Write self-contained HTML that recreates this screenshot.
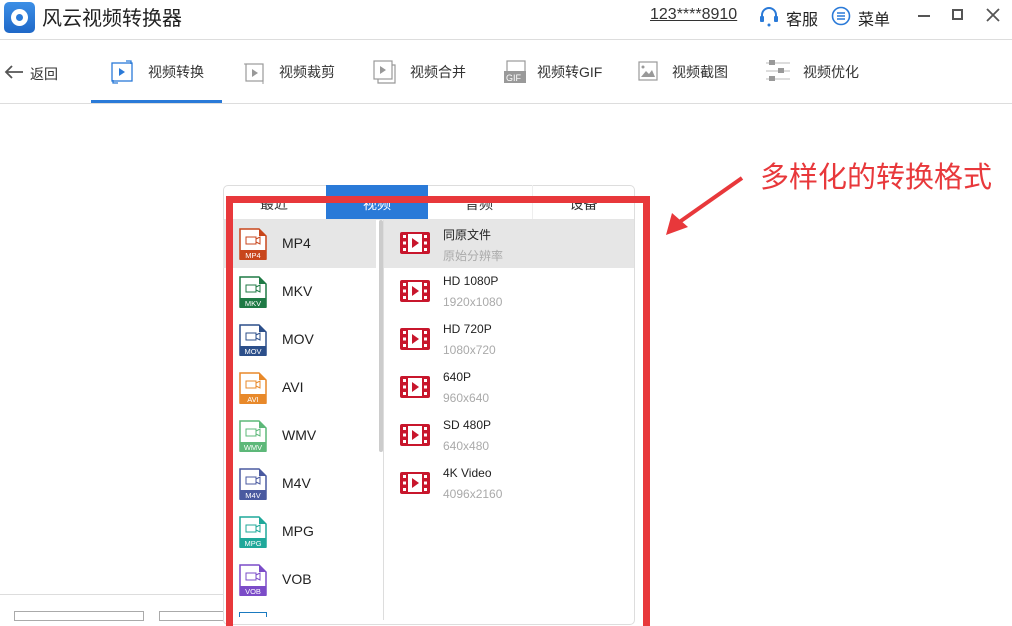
<!DOCTYPE html>
<html><head><meta charset="utf-8"><style>
*{margin:0;padding:0;box-sizing:border-box}
body{width:1012px;height:615px;overflow:hidden;background:#fff;font-family:"Liberation Sans","Noto Sans CJK SC",sans-serif;position:relative;color:#222}
.a{position:absolute}
.tab{position:absolute;top:185px;height:34px;width:102px;text-align:center;font-size:14px;line-height:38px;color:#333;overflow:hidden}
.li{position:absolute;left:223px;width:153px;height:48px}
.li .t{position:absolute;left:59px;top:15px;font-size:14px;color:#222}
.li svg{position:absolute;left:16px;top:8px}
.ri{position:absolute;left:384px;width:250px;height:48px}
.ri svg{position:absolute;left:16px;top:12px}
.ri .t1{position:absolute;left:59px;top:6px;font-size:12px;color:#222}
.ri .t2{position:absolute;left:59px;top:27px;font-size:12px;color:#aaa}
.nav{position:absolute;top:62px;font-size:14px;color:#333}
</style></head><body>
<!-- title bar -->
<div class="a" style="left:4px;top:2px;width:31px;height:31px;border-radius:5px;background:linear-gradient(#3c8fe6,#1f68c8)"></div>
<div class="a" style="left:11px;top:9px;width:17px;height:17px;border-radius:50%;background:#fff"></div>
<div class="a" style="left:16px;top:14px;width:7px;height:7px;border-radius:50%;background:#2a7ad8"></div>
<div class="a" style="left:42px;top:2px;font-size:20px;color:#222">风云视频转换器</div>
<div class="a" style="left:650px;top:6px;font-size:16px;color:#333;text-decoration:underline">123****8910</div>
<svg class="a" style="left:759px;top:6px" width="20" height="22" viewBox="0 0 20 22"><path d="M3 12 V9 a7 7 0 0 1 14 0 V12" fill="none" stroke="#2a7ad8" stroke-width="2"/><rect x="1" y="10" width="4" height="6" rx="1" fill="#2a7ad8"/><rect x="15" y="10" width="4" height="6" rx="1" fill="#2a7ad8"/><circle cx="10" cy="19" r="1.5" fill="#2a7ad8"/></svg>
<div class="a" style="left:786px;top:6px;font-size:16px;color:#222">客服</div>
<svg class="a" style="left:831px;top:6px" width="20" height="20"><circle cx="10" cy="10" r="8.5" fill="none" stroke="#2a7ad8" stroke-width="1.6"/><path d="M6 7h8M6 10h8M6 13h8" stroke="#2a7ad8" stroke-width="1.5"/></svg>
<div class="a" style="left:858px;top:6px;font-size:16px;color:#222">菜单</div>
<div class="a" style="left:918px;top:15px;width:12px;height:2px;background:#555"></div>
<div class="a" style="left:952px;top:9px;width:11px;height:11px;border:2px solid #555"></div>
<svg class="a" style="left:986px;top:8px" width="14" height="14"><path d="M1 1L13 13M13 1L1 13" stroke="#555" stroke-width="1.8"/></svg>
<div class="a" style="left:0;top:39px;width:1012px;height:1px;background:#ddd"></div>
<!-- toolbar -->
<svg class="a" style="left:4px;top:64px" width="20" height="16"><path d="M19 8H2M8 2L2 8l6 6" fill="none" stroke="#555" stroke-width="1.8"/></svg>
<div class="nav" style="left:30px;top:64px">返回</div>
<svg class="a" style="left:110px;top:59px" width="24" height="26"><rect x="2" y="4" width="20" height="18" fill="none" stroke="#2a7ad8" stroke-width="1.3"/><path d="M9 9l6 4-6 4z" fill="#2a7ad8"/><path d="M16 2h5v3M8 24H3v-3" fill="none" stroke="#2a7ad8" stroke-width="1.3"/></svg>
<div class="nav" style="left:148px">视频转换</div>
<div class="a" style="left:91px;top:100px;width:131px;height:3px;background:#2a7ad8"></div>
<svg class="a" style="left:242px;top:59px" width="24" height="26"><rect x="4" y="5" width="17" height="17" fill="none" stroke="#999" stroke-width="1.2"/><path d="M10 10l6 4-6 4z" fill="#999"/><path d="M2 5h2M21 22v3" stroke="#999"/></svg>
<div class="nav" style="left:279px">视频裁剪</div>
<svg class="a" style="left:372px;top:59px" width="26" height="26"><rect x="2" y="2" width="18" height="18" fill="#fff" stroke="#999" stroke-width="1.2"/><path d="M20 6h3v18H6v-4" fill="none" stroke="#999" stroke-width="1.2"/><path d="M8 7l6 4-6 4z" fill="#999"/></svg>
<div class="nav" style="left:410px">视频合并</div>
<svg class="a" style="left:503px;top:59px" width="26" height="26"><rect x="4" y="2" width="18" height="18" fill="none" stroke="#999" stroke-width="1.2"/><rect x="1" y="12" width="22" height="12" fill="#999"/><text x="3" y="22" font-size="9" fill="#fff" font-family="Liberation Sans">GIF</text></svg>
<div class="nav" style="left:537px">视频转GIF</div>
<svg class="a" style="left:636px;top:59px" width="24" height="26"><rect x="3" y="3" width="18" height="18" fill="none" stroke="#999" stroke-width="1.2"/><path d="M5 18l5-6 3 3 3-4 3 7z" fill="#999"/><circle cx="7" cy="8" r="1.5" fill="#999"/></svg>
<div class="nav" style="left:672px">视频截图</div>
<svg class="a" style="left:765px;top:59px" width="26" height="26"><path d="M1 4h24M1 12h24M1 20h24" stroke="#bbb" stroke-width="1"/><rect x="4" y="1" width="6" height="5" fill="#999"/><rect x="13" y="9" width="6" height="5" fill="#999"/><rect x="4" y="17" width="6" height="5" fill="#999"/></svg>
<div class="nav" style="left:803px">视频优化</div>
<div class="a" style="left:0;top:103px;width:1012px;height:1px;background:#ddd"></div>
<!-- annotation -->
<div class="a" style="left:760px;top:154px;font-size:29px;color:#e8383b">多样化的转换格式</div>
<svg class="a" style="left:660px;top:175px" width="90" height="65"><path d="M82 3L18 48" stroke="#e8383b" stroke-width="4"/><path d="M6 60l6-22 16 14z" fill="#e8383b"/></svg>
<!-- bottom left -->
<div class="a" style="left:0;top:594px;width:224px;height:1px;background:#ddd"></div>
<div class="a" style="left:14px;top:611px;width:130px;height:10px;border:1px solid #aaa"></div>
<div class="a" style="left:159px;top:611px;width:70px;height:10px;border:1px solid #aaa"></div>
<!-- panel -->
<div class="a" style="left:223px;top:185px;width:412px;height:440px;border:1px solid #ddd;border-radius:5px;background:#fff"></div>
<div class="tab" style="left:223px">最近</div>
<div class="tab" style="left:326px;background:#2a7ad8;color:#fff">视频</div>
<div class="tab" style="left:428px">音频</div>
<div class="tab" style="left:532px;border-left:1px solid #eee">设备</div>
<div class="a" style="left:224px;top:219px;width:410px;height:1px;background:#e5e5e5"></div>
<div class="a" style="left:383px;top:220px;width:1px;height:400px;background:#ddd"></div>
<div class="a" style="left:379px;top:220px;width:4px;height:232px;background:#ccc;border-radius:2px"></div>
<div class="li" style="top:220px;background:#e6e6e6"><svg width="28" height="32"><path d="M1 1h19l7 7v23H1z" fill="#fff" stroke="#c8461c" stroke-width="1.5"/><path d="M20 1v7h7" fill="#c8461c"/><rect x="1" y="22" width="26" height="10" fill="#c8461c"/><rect x="7" y="9" width="10" height="7" fill="none" stroke="#c8461c"/><path d="M17 11l4-2v7l-4-2" fill="none" stroke="#c8461c"/><text x="14" y="30" font-size="7.5" fill="#fff" text-anchor="middle" font-family="Liberation Sans">MP4</text></svg><div class="t">MP4</div></div>
<div class="li" style="top:268px"><svg width="28" height="32"><path d="M1 1h19l7 7v23H1z" fill="#fff" stroke="#1f7a45" stroke-width="1.5"/><path d="M20 1v7h7" fill="#1f7a45"/><rect x="1" y="22" width="26" height="10" fill="#1f7a45"/><rect x="7" y="9" width="10" height="7" fill="none" stroke="#1f7a45"/><path d="M17 11l4-2v7l-4-2" fill="none" stroke="#1f7a45"/><text x="14" y="30" font-size="7.5" fill="#fff" text-anchor="middle" font-family="Liberation Sans">MKV</text></svg><div class="t">MKV</div></div>
<div class="li" style="top:316px"><svg width="28" height="32"><path d="M1 1h19l7 7v23H1z" fill="#fff" stroke="#2c4f8a" stroke-width="1.5"/><path d="M20 1v7h7" fill="#2c4f8a"/><rect x="1" y="22" width="26" height="10" fill="#2c4f8a"/><rect x="7" y="9" width="10" height="7" fill="none" stroke="#2c4f8a"/><path d="M17 11l4-2v7l-4-2" fill="none" stroke="#2c4f8a"/><text x="14" y="30" font-size="7.5" fill="#fff" text-anchor="middle" font-family="Liberation Sans">MOV</text></svg><div class="t">MOV</div></div>
<div class="li" style="top:364px"><svg width="28" height="32"><path d="M1 1h19l7 7v23H1z" fill="#fff" stroke="#e8892a" stroke-width="1.5"/><path d="M20 1v7h7" fill="#e8892a"/><rect x="1" y="22" width="26" height="10" fill="#e8892a"/><rect x="7" y="9" width="10" height="7" fill="none" stroke="#e8892a"/><path d="M17 11l4-2v7l-4-2" fill="none" stroke="#e8892a"/><text x="14" y="30" font-size="7.5" fill="#fff" text-anchor="middle" font-family="Liberation Sans">AVI</text></svg><div class="t">AVI</div></div>
<div class="li" style="top:412px"><svg width="28" height="32"><path d="M1 1h19l7 7v23H1z" fill="#fff" stroke="#5db879" stroke-width="1.5"/><path d="M20 1v7h7" fill="#5db879"/><rect x="1" y="22" width="26" height="10" fill="#5db879"/><rect x="7" y="9" width="10" height="7" fill="none" stroke="#5db879"/><path d="M17 11l4-2v7l-4-2" fill="none" stroke="#5db879"/><text x="14" y="30" font-size="7.5" fill="#fff" text-anchor="middle" font-family="Liberation Sans">WMV</text></svg><div class="t">WMV</div></div>
<div class="li" style="top:460px"><svg width="28" height="32"><path d="M1 1h19l7 7v23H1z" fill="#fff" stroke="#4a5aa0" stroke-width="1.5"/><path d="M20 1v7h7" fill="#4a5aa0"/><rect x="1" y="22" width="26" height="10" fill="#4a5aa0"/><rect x="7" y="9" width="10" height="7" fill="none" stroke="#4a5aa0"/><path d="M17 11l4-2v7l-4-2" fill="none" stroke="#4a5aa0"/><text x="14" y="30" font-size="7.5" fill="#fff" text-anchor="middle" font-family="Liberation Sans">M4V</text></svg><div class="t">M4V</div></div>
<div class="li" style="top:508px"><svg width="28" height="32"><path d="M1 1h19l7 7v23H1z" fill="#fff" stroke="#1fa89a" stroke-width="1.5"/><path d="M20 1v7h7" fill="#1fa89a"/><rect x="1" y="22" width="26" height="10" fill="#1fa89a"/><rect x="7" y="9" width="10" height="7" fill="none" stroke="#1fa89a"/><path d="M17 11l4-2v7l-4-2" fill="none" stroke="#1fa89a"/><text x="14" y="30" font-size="7.5" fill="#fff" text-anchor="middle" font-family="Liberation Sans">MPG</text></svg><div class="t">MPG</div></div>
<div class="li" style="top:556px"><svg width="28" height="32"><path d="M1 1h19l7 7v23H1z" fill="#fff" stroke="#7b4cc8" stroke-width="1.5"/><path d="M20 1v7h7" fill="#7b4cc8"/><rect x="1" y="22" width="26" height="10" fill="#7b4cc8"/><rect x="7" y="9" width="10" height="7" fill="none" stroke="#7b4cc8"/><path d="M17 11l4-2v7l-4-2" fill="none" stroke="#7b4cc8"/><text x="14" y="30" font-size="7.5" fill="#fff" text-anchor="middle" font-family="Liberation Sans">VOB</text></svg><div class="t">VOB</div></div>
<div class="a" style="left:239px;top:612px;width:28px;height:5px;border:1.5px solid #1a7ac0;border-bottom:none"></div>
<!-- right list -->
<div class="ri" style="top:220px;background:#e6e6e6"><svg width="30" height="22"><rect x="0" y="0" width="30" height="22" rx="2" fill="#c8162c"/><rect x="3" y="3" width="3" height="3" fill="#fff"/><rect x="3" y="9.5" width="3" height="3" fill="#fff"/><rect x="3" y="16" width="3" height="3" fill="#fff"/><rect x="24" y="3" width="3" height="3" fill="#fff"/><rect x="24" y="9.5" width="3" height="3" fill="#fff"/><rect x="24" y="16" width="3" height="3" fill="#fff"/><rect x="8" y="2" width="14" height="18" fill="#fff"/><path d="M12 6l7 5-7 5z" fill="#c8162c"/></svg><div class="t1">同原文件</div><div class="t2">原始分辨率</div></div>
<div class="ri" style="top:268px"><svg width="30" height="22"><rect x="0" y="0" width="30" height="22" rx="2" fill="#c8162c"/><rect x="3" y="3" width="3" height="3" fill="#fff"/><rect x="3" y="9.5" width="3" height="3" fill="#fff"/><rect x="3" y="16" width="3" height="3" fill="#fff"/><rect x="24" y="3" width="3" height="3" fill="#fff"/><rect x="24" y="9.5" width="3" height="3" fill="#fff"/><rect x="24" y="16" width="3" height="3" fill="#fff"/><rect x="8" y="2" width="14" height="18" fill="#fff"/><path d="M12 6l7 5-7 5z" fill="#c8162c"/></svg><div class="t1">HD 1080P</div><div class="t2">1920x1080</div></div>
<div class="ri" style="top:316px"><svg width="30" height="22"><rect x="0" y="0" width="30" height="22" rx="2" fill="#c8162c"/><rect x="3" y="3" width="3" height="3" fill="#fff"/><rect x="3" y="9.5" width="3" height="3" fill="#fff"/><rect x="3" y="16" width="3" height="3" fill="#fff"/><rect x="24" y="3" width="3" height="3" fill="#fff"/><rect x="24" y="9.5" width="3" height="3" fill="#fff"/><rect x="24" y="16" width="3" height="3" fill="#fff"/><rect x="8" y="2" width="14" height="18" fill="#fff"/><path d="M12 6l7 5-7 5z" fill="#c8162c"/></svg><div class="t1">HD 720P</div><div class="t2">1080x720</div></div>
<div class="ri" style="top:364px"><svg width="30" height="22"><rect x="0" y="0" width="30" height="22" rx="2" fill="#c8162c"/><rect x="3" y="3" width="3" height="3" fill="#fff"/><rect x="3" y="9.5" width="3" height="3" fill="#fff"/><rect x="3" y="16" width="3" height="3" fill="#fff"/><rect x="24" y="3" width="3" height="3" fill="#fff"/><rect x="24" y="9.5" width="3" height="3" fill="#fff"/><rect x="24" y="16" width="3" height="3" fill="#fff"/><rect x="8" y="2" width="14" height="18" fill="#fff"/><path d="M12 6l7 5-7 5z" fill="#c8162c"/></svg><div class="t1">640P</div><div class="t2">960x640</div></div>
<div class="ri" style="top:412px"><svg width="30" height="22"><rect x="0" y="0" width="30" height="22" rx="2" fill="#c8162c"/><rect x="3" y="3" width="3" height="3" fill="#fff"/><rect x="3" y="9.5" width="3" height="3" fill="#fff"/><rect x="3" y="16" width="3" height="3" fill="#fff"/><rect x="24" y="3" width="3" height="3" fill="#fff"/><rect x="24" y="9.5" width="3" height="3" fill="#fff"/><rect x="24" y="16" width="3" height="3" fill="#fff"/><rect x="8" y="2" width="14" height="18" fill="#fff"/><path d="M12 6l7 5-7 5z" fill="#c8162c"/></svg><div class="t1">SD 480P</div><div class="t2">640x480</div></div>
<div class="ri" style="top:460px"><svg width="30" height="22"><rect x="0" y="0" width="30" height="22" rx="2" fill="#c8162c"/><rect x="3" y="3" width="3" height="3" fill="#fff"/><rect x="3" y="9.5" width="3" height="3" fill="#fff"/><rect x="3" y="16" width="3" height="3" fill="#fff"/><rect x="24" y="3" width="3" height="3" fill="#fff"/><rect x="24" y="9.5" width="3" height="3" fill="#fff"/><rect x="24" y="16" width="3" height="3" fill="#fff"/><rect x="8" y="2" width="14" height="18" fill="#fff"/><path d="M12 6l7 5-7 5z" fill="#c8162c"/></svg><div class="t1">4K Video</div><div class="t2">4096x2160</div></div>
<!-- red frame -->
<div class="a" style="left:226px;top:196px;width:424px;height:430px;border:7px solid #e8383b;border-bottom:none"></div>
</body></html>
